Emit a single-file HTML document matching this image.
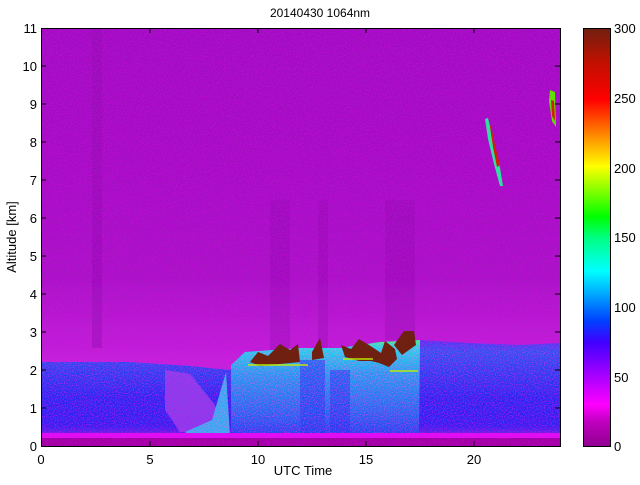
<!DOCTYPE html>
<html><head><meta charset="utf-8"><style>
body{margin:0;background:#fff;width:640px;height:480px;overflow:hidden;font-family:"Liberation Sans",sans-serif}
svg text{font-family:"Liberation Sans",sans-serif;font-size:13px;fill:#000}
</style></head><body>
<svg width="640" height="480" viewBox="0 0 640 480" xmlns="http://www.w3.org/2000/svg">
<defs>
<filter id="n" x="0" y="0" width="100%" height="100%">
<feTurbulence type="fractalNoise" baseFrequency="0.9" numOctaves="1" seed="3" result="t"/>
<feColorMatrix in="t" type="matrix" values="0 0 0 0 0.8  0 0 0 0 0  0 0 0 0 1  0 0 0 1.6 -0.78" result="m"/>
<feComposite in="m" in2="SourceGraphic" operator="over"/>
</filter>
<linearGradient id="bg" x1="0" y1="0" x2="0" y2="1">
<stop offset="0" stop-color="#a010c0"/><stop offset="0.6" stop-color="#a812c4"/>
<stop offset="0.78" stop-color="#c020d6"/><stop offset="0.84" stop-color="#c822dc"/><stop offset="1" stop-color="#c020d8"/>
</linearGradient>
<linearGradient id="blue" x1="0" y1="0" x2="0" y2="1">
<stop offset="0" stop-color="#6030f0"/><stop offset="0.12" stop-color="#3050f0"/><stop offset="0.6" stop-color="#2828f0"/><stop offset="0.9" stop-color="#3020f0"/><stop offset="1" stop-color="#8020e0"/>
</linearGradient>
<linearGradient id="cyan" x1="0" y1="0" x2="0" y2="1">
<stop offset="0" stop-color="#40f080"/><stop offset="0.08" stop-color="#20d0e8"/><stop offset="0.35" stop-color="#2098f0"/><stop offset="0.8" stop-color="#2060f0"/><stop offset="1" stop-color="#2040f0"/>
</linearGradient>
<linearGradient id="cb" x1="0" y1="1" x2="0" y2="0">
<stop offset="0" stop-color="#900090"/><stop offset="0.06" stop-color="#c000c0"/><stop offset="0.1" stop-color="#ff00ff"/>
<stop offset="0.2" stop-color="#8000ff"/><stop offset="0.25" stop-color="#4000ff"/><stop offset="0.3" stop-color="#0040ff"/>
<stop offset="0.38" stop-color="#00c0ff"/><stop offset="0.42" stop-color="#00ffff"/><stop offset="0.5" stop-color="#00ff80"/>
<stop offset="0.55" stop-color="#00ff00"/><stop offset="0.67" stop-color="#ffff00"/><stop offset="0.75" stop-color="#ff8000"/>
<stop offset="0.83" stop-color="#ff0000"/><stop offset="0.92" stop-color="#c01000"/><stop offset="1" stop-color="#702010"/>
</linearGradient>
</defs>
<text x="320" y="17" text-anchor="middle" style="font-size:12px">20140430 1064nm</text>
<g filter="url(#n)">
<rect x="41" y="28" width="519" height="418" fill="url(#bg)"/>
<rect x="92" y="28" width="10" height="320" fill="#9010b0" opacity="0.5"/>
<rect x="270" y="200" width="20" height="150" fill="#9010b0" opacity="0.4"/>
<rect x="318" y="200" width="10" height="150" fill="#9010b0" opacity="0.4"/>
<rect x="385" y="200" width="30" height="140" fill="#9010b0" opacity="0.4"/>
<polygon points="41,362 130,362 190,366 230,370 250,357 300,350 400,346 420,340 470,343 520,345 560,343 560,436 41,436" fill="url(#blue)"/>
<polygon points="165,370 190,374 215,405 222,430 180,432 165,410" fill="#a040e8" opacity="0.8"/>
<polygon points="185,432 212,420 226,372 230,436 190,436" fill="#30a8f0"/>
<polygon points="231,365 245,352 300,348 340,348 380,342 420,340 419,436 231,436" fill="url(#cyan)"/>
<rect x="300" y="360" width="25" height="76" fill="#2040f0" opacity="0.6"/>
<rect x="330" y="370" width="20" height="66" fill="#2830f0" opacity="0.5"/>
<rect x="41" y="433" width="519" height="5" fill="#e010f0"/>
<rect x="41" y="438" width="519" height="8" fill="#a000a0"/>
</g>
<g fill="#702010">
<path d="M250,362 l8,-10 l10,4 l12,-12 l10,6 l8,-6 l2,18 l-20,2 l-20,2z"/>
<path d="M312,352 l8,-14 l4,20 l-12,2z"/>
<path d="M341,345 l10,4 l8,-10 l10,6 l12,8 l4,-12 l10,8 l2,10 l-8,8 l-10,-4 l-8,-2 l-12,0 l-14,-4z"/>
<path d="M394,345 l10,-14 l10,0 l2,14 l-14,10z"/>
</g>
<g fill="#c0f000" opacity="0.7">
<rect x="248" y="364" width="60" height="2"/><rect x="343" y="358" width="30" height="2"/><rect x="390" y="370" width="28" height="2"/>
</g>
<g>
<path d="M488,118 l6,25 l6,25 l3,18 l-3,0 l-6,-22 l-6,-25 l-3,-20z" fill="#30e0a0"/>
<path d="M491,125 l4,20 l5,20 l-3,2 l-4,-20 l-3,-20z" fill="#d02000"/>
<path d="M550,90 l5,2 l1,35 l-4,-6 l-3,-20z" fill="#60e000"/>
<path d="M551,100 l3,1 l1,20 l-3,-5z" fill="#d02000"/>
</g>
<rect x="41.5" y="28.5" width="519" height="418" fill="none" stroke="#000"/>
<g stroke="#000">
<path d="M150,446v-5M258,446v-5M366,446v-5M474,446v-5M150,28v5M258,28v5M366,28v5M474,28v5"/>
<path d="M41,408h5M41,370h5M41,332h5M41,294h5M41,256h5M41,218h5M41,180h5M41,142h5M41,104h5M41,66h5"/>
<path d="M560,408h-5M560,370h-5M560,332h-5M560,294h-5M560,256h-5M560,218h-5M560,180h-5M560,142h-5M560,104h-5M560,66h-5"/>
</g>
<g text-anchor="middle">
<text x="41" y="464">0</text><text x="150" y="464">5</text><text x="258" y="464">10</text><text x="366" y="464">15</text><text x="474" y="464">20</text>
<text x="303" y="475" style="font-size:13px">UTC Time</text>
</g>
<g text-anchor="end">
<text x="37" y="451">0</text><text x="37" y="413">1</text><text x="37" y="375">2</text><text x="37" y="337">3</text><text x="37" y="299">4</text><text x="37" y="261">5</text><text x="37" y="223">6</text><text x="37" y="185">7</text><text x="37" y="147">8</text><text x="37" y="109">9</text><text x="37" y="71">10</text><text x="37" y="33">11</text>
</g>
<text transform="translate(16,237) rotate(-90)" text-anchor="middle">Altitude [km]</text>
<rect x="583.5" y="28.5" width="27" height="418" fill="url(#cb)" stroke="#000"/>
<g text-anchor="start">
<text x="614" y="451">0</text><text x="614" y="382">50</text><text x="614" y="312">100</text><text x="614" y="242">150</text><text x="614" y="173">200</text><text x="614" y="103">250</text><text x="614" y="33">300</text>
</g>
</svg>
</body></html>
